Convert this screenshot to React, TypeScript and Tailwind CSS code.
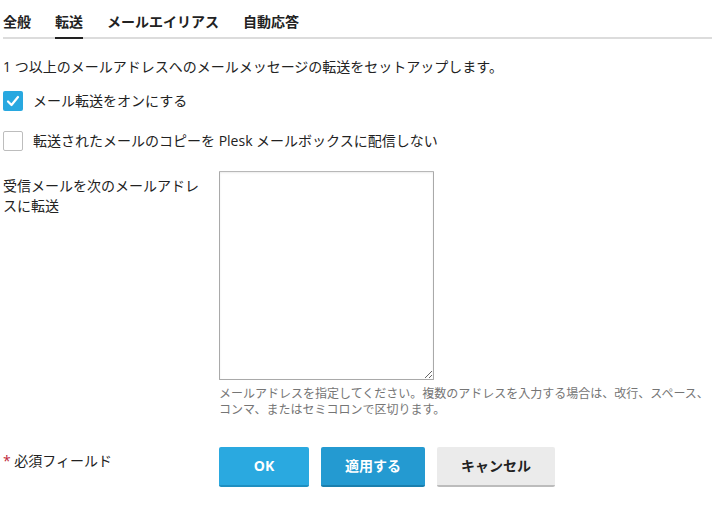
import React from "react";

export default function App() {
  return (
    <div className="pl-[3px] font-['Open_Sans','Noto_Sans_CJK_JP',sans-serif] text-[14px] leading-[20px] text-[#222]">
      {/* Tabs */}
      <div className="flex gap-6 border-b-2 border-[#dcdcdc] pt-[12px]">
        {["全般", "転送", "メールエイリアス", "自動応答"].map((t) => (
          <div
            key={t}
            className={
              "pb-[5px] font-semibold -mb-[2px] border-b-2 " +
              (t === "転送" ? "border-[#222]" : "border-transparent")
            }
          >
            {t}
          </div>
        ))}
      </div>

      <p className="mt-[18px]">1 つ以上のメールアドレスへのメールメッセージの転送をセットアップします。</p>

      <label className="mt-[14px] flex items-center gap-[10px]">
        <span className="flex h-[20px] w-[20px] items-center justify-center rounded-[2px] bg-[#28a8e0]">
          <svg width="14" height="14" viewBox="0 0 14 14" fill="none">
            <path d="M2 7.5 L5.5 11 L12 3" stroke="white" strokeWidth="2.2" strokeLinecap="round" strokeLinejoin="round" />
          </svg>
        </span>
        <span>メール転送をオンにする</span>
      </label>

      <label className="mt-[20px] flex items-center gap-[10px]">
        <span className="h-[20px] w-[20px] rounded-[2px] border border-[#bdbdbd] bg-white" />
        <span>転送されたメールのコピーを Plesk メールボックスに配信しない</span>
      </label>

      <div className="mt-[20px] flex">
        <div className="w-[216px] shrink-0 pr-[12px] pt-[5px]">
          受信メールを次のメールアドレ
          <br />
          スに転送
        </div>
        <div className="flex-1">
          <textarea className="block h-[209px] w-[215px] rounded-[1px] border border-[#a9a9a9] border-t-[#b8b8b8] bg-white shadow-[inset_0_1px_2px_rgba(0,0,0,0.08)] outline-none" />
          <div className="mt-[6px] text-[12px] leading-[16px] text-[#757575]">
            <span className="whitespace-nowrap">メールアドレスを指定してください。複数のアドレスを入力する場合は、改行、スペース、</span>
            <br />
            コンマ、またはセミコロンで区切ります。
          </div>
        </div>
      </div>

      <div className="mt-[29px] flex">
        <div className="w-[216px] shrink-0 pt-[4px]">
          <span className="text-[#c0283a]">*</span> 必須フィールド
        </div>
        <div className="flex gap-3">
          <button className="h-[40px] min-w-[90px] rounded-[2px] border-b-2 border-[#1e8fc1] bg-[#2aa9e0] px-6 font-bold text-white">
            OK
          </button>
          <button className="h-[40px] rounded-[2px] border-b-2 border-[#1a7fae] bg-[#249ad1] px-6 font-bold text-white">
            適用する
          </button>
          <button className="h-[40px] rounded-[2px] border-b-2 border-[#bcbcbc] bg-[#ebebeb] px-6 font-bold text-[#222]">
            キャンセル
          </button>
        </div>
      </div>
    </div>
  );
}
